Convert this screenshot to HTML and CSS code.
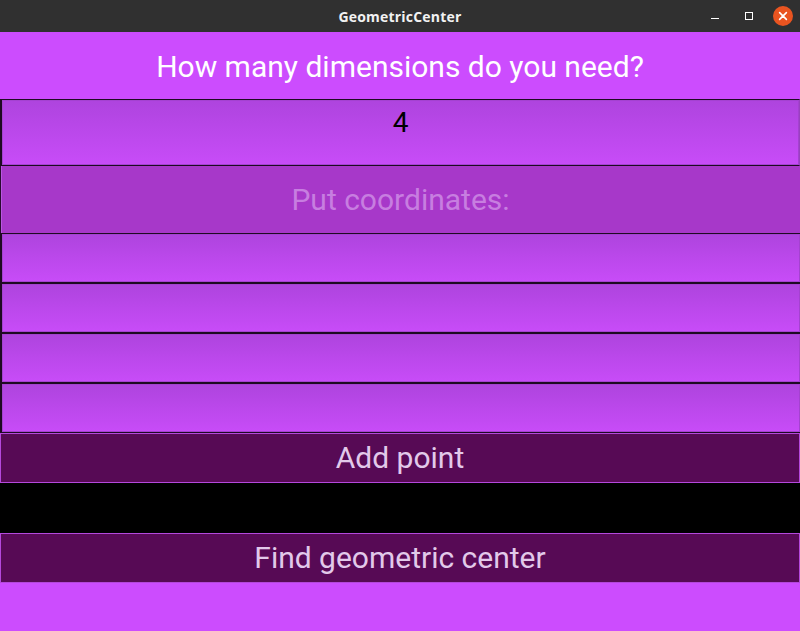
FILE: index.html
```html
<!DOCTYPE html>
<html>
<head>
<meta charset="utf-8">
<link rel="stylesheet" href="styles.css">
</head>
<body>
<div class="window">
  <div class="titlebar">
    <span class="title">GeometricCenter</span>
    <div class="controls">
      <span class="ctl min"></span>
      <span class="ctl max"></span>
      <span class="ctl close">
        <svg width="20" height="20" viewBox="0 0 20 20"><circle cx="10" cy="10" r="10" fill="#e95420"/><path d="M6.6 6.6 L13.4 13.4 M13.4 6.6 L6.6 13.4" stroke="#fff" stroke-width="1.6" stroke-linecap="round"/></svg>
      </span>
    </div>
  </div>
  <div class="header">How many dimensions do you need?</div>
  <div class="field dim">4</div>
  <div class="label">Put coordinates:</div>
  <div class="field point"></div>
  <div class="field point"></div>
  <div class="field point"></div>
  <div class="field point"></div>
  <div class="button">Add point</div>
  <div class="gap"></div>
  <div class="button">Find geometric center</div>
  <div class="footer"></div>
</div>
</body>
</html>
```
FILE: styles.css
```css
html, body {
  margin: 0;
  padding: 0;
  background: #cc4cff;
}
.window {
  width: 800px;
  height: 631px;
  display: flex;
  flex-direction: column;
  font-family: Roboto, "Noto Sans", sans-serif;
  overflow: hidden;
}
.titlebar {
  height: 32px;
  flex: none;
  background: #303030;
  display: flex;
  align-items: center;
  justify-content: center;
  position: relative;
}
.title {
  color: #f2f2f2;
  font-family: "Open Sans", "DejaVu Sans", sans-serif;
  font-weight: 700;
  font-size: 14px;
  letter-spacing: 0.2px;
}
.controls {
  position: absolute;
  right: 0;
  top: 0;
  height: 32px;
  display: flex;
  align-items: center;
}
.ctl {
  width: 34px;
  height: 32px;
  display: flex;
  align-items: center;
  justify-content: center;
}
.ctl.min::after {
  content: "";
  width: 8px;
  height: 1px;
  background: #fff;
  margin-top: 5px;
}
.ctl.max::after {
  content: "";
  width: 6px;
  height: 6px;
  border: 1px solid #fff;
}
.ctl.close svg {
  display: block;
}
.header {
  height: 67px;
  flex: none;
  background: #cc4cfe;
  color: #ffffff;
  font-size: 30px;
  display: flex;
  align-items: center;
  justify-content: center;
  box-sizing: border-box;
  padding-top: 2px;
}
.field {
  flex: none;
  box-sizing: border-box;
  border: 1px solid #1e0a22;
  border-left-width: 2px;
  box-shadow: inset 0 0 0 1px #a442d0;
  background: linear-gradient(#ae44de, #c84cf8);
}
.field.dim {
  height: 67px;
  color: #000;
  font-size: 28px;
  text-align: center;
  padding-top: 6px;
  line-height: 33px;
  border-right-width: 1px;
  border-right-color: #9a40c0;
}
.label {
  height: 67px;
  flex: none;
  box-sizing: border-box;
  background: #a738c9;
  border-left: 1px solid #2a0a30;
  box-shadow: inset 1px 0 0 #b858e0;
  color: #c77ee0;
  font-size: 30px;
  display: flex;
  align-items: center;
  justify-content: center;
}
.field.point {
  height: 50px;
  border-right-width: 0;
}
.button {
  height: 50px;
  flex: none;
  box-sizing: border-box;
  background: #570a55;
  border: 1px solid #b448dc;
  color: #e2c9ea;
  font-size: 30px;
  display: flex;
  align-items: center;
  justify-content: center;
  padding-bottom: 2px;
}
.gap {
  height: 50px;
  flex: none;
  background: #000;
}
.footer {
  flex: 1;
  background: #cc4cfe;
}
```
